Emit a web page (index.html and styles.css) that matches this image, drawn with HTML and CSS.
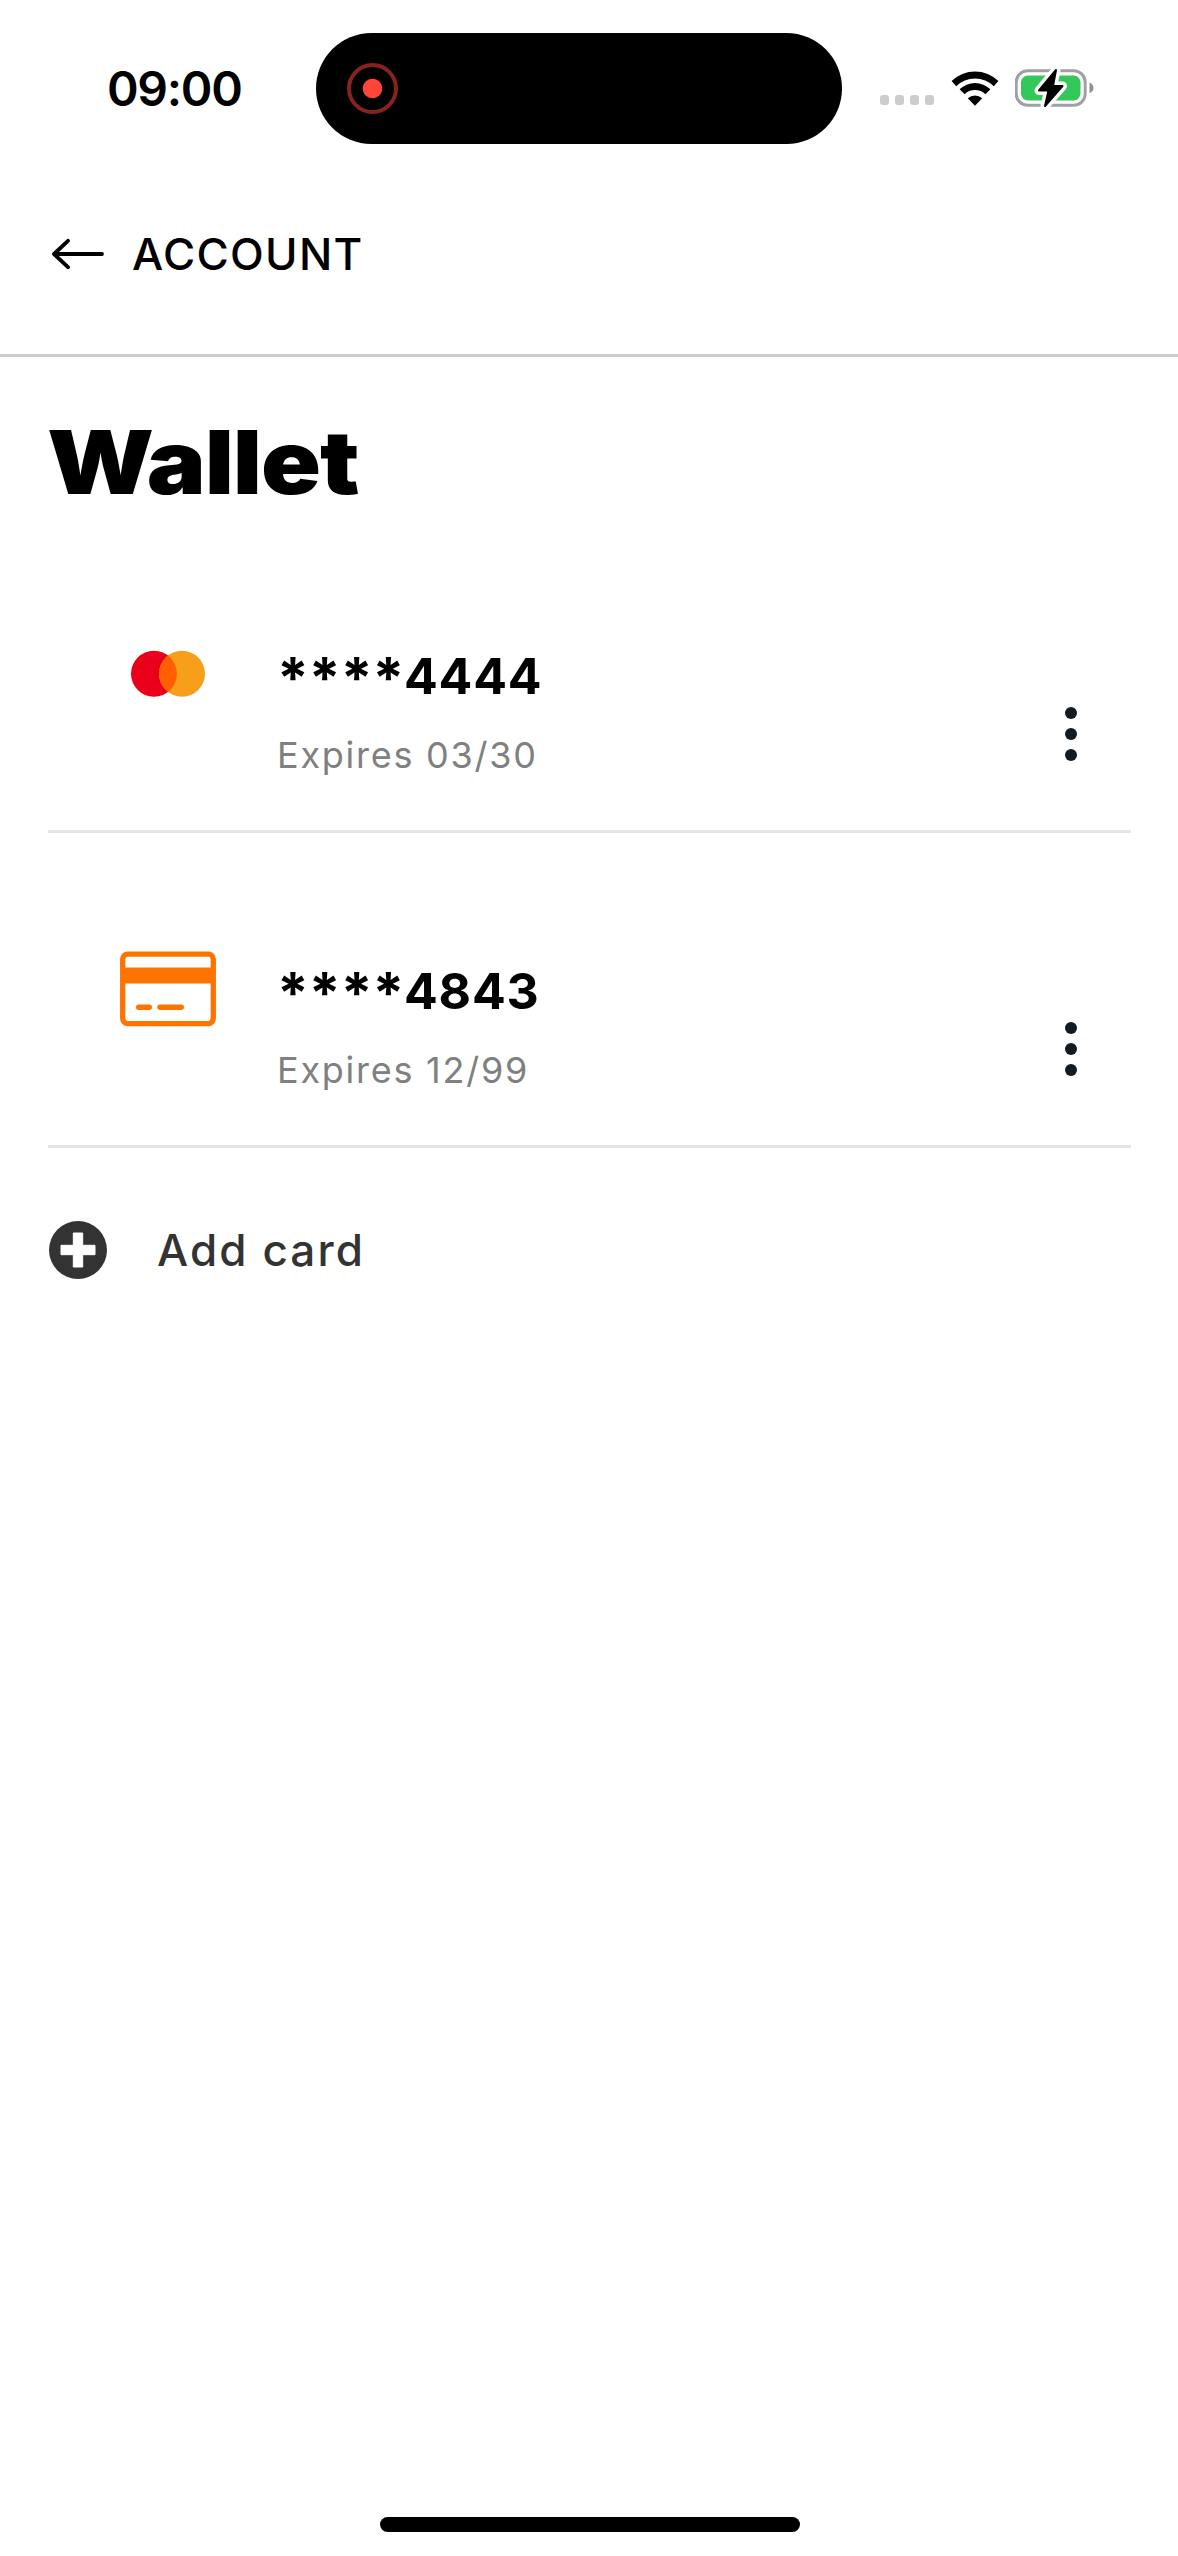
FILE: index.html
```html
<!DOCTYPE html>
<html lang="en">
<head>
<meta charset="utf-8">
<title>Wallet</title>
<link rel="stylesheet" href="styles.css">
</head>
<body>
<div class="screen">
  <header class="status">
    <span class="time">09:00</span>
    <div class="island"><span class="record"></span></div>
    <div class="signal"><i></i><i></i><i></i><i></i></div>
    <svg class="wifi" width="48" height="36" viewBox="0 0 48 36">
      <path d="M0.6 10.1A33.5 33.5 0 0 1 47.4 10.1L42.8 15.2A27 27 0 0 0 5.2 15.2Z"/>
      <path d="M8.6 18.3A22.2 22.2 0 0 1 39.4 18.3L34.4 23.3A15 15 0 0 0 13.6 23.3Z"/>
      <path d="M16.8 27.3A11 11 0 0 1 31.2 27.3L24 34.8Z"/>
    </svg>
    <svg class="battery" width="80" height="40" viewBox="0 0 80 40">
      <rect x="1.2" y="2.7" width="69" height="34.6" rx="11.5" fill="#fff" stroke="#a0a0a4" stroke-width="3"/>
      <rect x="6" y="7.5" width="59.5" height="25" rx="7" fill="#34c759"/>
      <path d="M74.5 14.5Q78.5 16.5 78.5 20T74.5 25Z" fill="#909093"/>
      <path d="M41 2L24 22.5H33.5L30 38L47.5 18H38Z" fill="#fff" stroke="#fff" stroke-width="9" stroke-linejoin="round"/>
      <path d="M41 2L24 22.5H33.5L30 38L47.5 18H38Z" stroke="#000" stroke-width="2" stroke-linejoin="round"/>
    </svg>
  </header>

  <nav class="nav">
    <svg width="56" height="36" viewBox="0 0 56 36" fill="none" stroke="#000" stroke-width="3.8" stroke-linecap="round" stroke-linejoin="round">
      <path d="M5 18H53M19 4.8L5 18L19 31.2"/>
    </svg>
    <span class="back">ACCOUNT</span>
  </nav>

  <main class="content">
    <h1 class="title">Wallet</h1>
    <ul class="cards">
      <li class="card">
        <svg class="brand" width="96" height="76" viewBox="0 0 96 76">
          <circle cx="34" cy="37.8" r="23" fill="#eb001b"/>
          <circle cx="62" cy="37.8" r="23" fill="#f79e1b"/>
          <path d="M48 19.6A23 23 0 0 1 48 56A23 23 0 0 1 48 19.6Z" fill="#ff5f00"/>
        </svg>
        <div class="info">
          <div class="number"><span class="mask">****</span><span class="digits">4444</span></div>
          <div class="expiry">Expires 03/30</div>
        </div>
        <div class="menu"><i></i><i></i><i></i></div>
      </li>
      <li class="card">
        <svg class="brand" width="96" height="76" viewBox="0 0 96 76" fill="#ff7300">
          <rect x="2.7" y="3.2" width="90.6" height="69.4" rx="5" fill="none" stroke="#ff7300" stroke-width="5.3"/>
          <rect x="2" y="16.5" width="92" height="16"/>
          <rect x="16" y="53.6" width="16" height="5.4" rx="2.7"/>
          <rect x="37.3" y="53.6" width="26.6" height="5.4" rx="2.7"/>
        </svg>
        <div class="info">
          <div class="number"><span class="mask">****</span><span class="digits">4843</span></div>
          <div class="expiry">Expires 12/99</div>
        </div>
        <div class="menu"><i></i><i></i><i></i></div>
      </li>
    </ul>
    <div class="add">
      <svg width="60" height="60" viewBox="0 0 60 60">
        <circle cx="30" cy="30" r="29" fill="#333"/>
        <path d="M13 25.3H25.3V13H34.7V25.3H47V34.7H34.7V47H25.3V34.7H13Z" fill="#fff" stroke="#fff" stroke-linejoin="round"/>
      </svg>
      <span class="add-label">Add card</span>
    </div>
  </main>
  <div class="home"></div>
</div>
</body>
</html>
```
FILE: styles.css
```css
* { box-sizing: border-box; margin: 0; padding: 0; }
body { background: #fff; color: #000; font-family: Inter, "Liberation Sans", sans-serif; }
svg { display: block; flex: none; }
.screen { width: 1178px; height: 2556px; display: flex; flex-direction: column; }

.status { height: 177px; display: flex; align-items: center; padding-left: 107px; }
.time { width: 209px; font-size: 48px; font-weight: 600; line-height: 60px; letter-spacing: -1.3px; }
.island { width: 526px; height: 111px; border-radius: 56px; background: #000; display: flex; align-items: center; padding-left: 31px; }
.record { width: 51px; height: 51px; border-radius: 50%; border: 4px solid #85241d; background: radial-gradient(circle, #ff453a 9.2px, #000 10.2px); }
.signal { display: flex; gap: 6px; margin: 23px 0 0 38px; }
.signal i { width: 9px; height: 10px; border-radius: 3px; background: #ccc; }
.wifi { margin-left: 16.5px; }
.battery { margin: -2px 0 0 16px; }

.nav { height: 180px; display: flex; align-items: flex-start; padding: 59px 0 0 49px; border-bottom: 3px solid #ccc; }
.back { margin-left: 27px; font-size: 44px; font-weight: 500; line-height: 36px; letter-spacing: 1.3px; }

.content { flex: 1; padding: 0 47px 0 48px; }
.title { width: max-content; margin: 53px 0 3px -1px; height: 105px; font-size: 88px; font-weight: 900; line-height: 105px; letter-spacing: -1px; transform: scaleX(1.125); transform-origin: left; }
.cards { list-style: none; }
.card { height: 315px; display: flex; align-items: flex-start; padding: 118px 54px 0 72px; border-bottom: 3px solid #e5e5e5; }
.info { margin-left: 61px; flex: 1; padding-top: 10px; }
.number { display: flex; height: 87px; font-size: 50px; font-weight: 700; line-height: 60px; letter-spacing: 0.8px; }
.mask { width: 127px; font-size: 57px; line-height: 63px; letter-spacing: 0; }
.expiry { font-size: 36px; line-height: 44px; color: #808080; letter-spacing: 1.75px; }
.menu { display: flex; flex-direction: column; gap: 9px; margin-top: 71px; }
.menu i { width: 12px; height: 12px; border-radius: 50%; background: #111b21; }

.add { display: flex; align-items: center; margin-top: 72px; }
.add-label { margin-left: 49px; font-size: 44px; font-weight: 500; line-height: 60px; color: #333; letter-spacing: 2.1px; }
.home { width: 420px; height: 15px; border-radius: 8px; background: #000; margin: 0 0 24px 380px; }
```
